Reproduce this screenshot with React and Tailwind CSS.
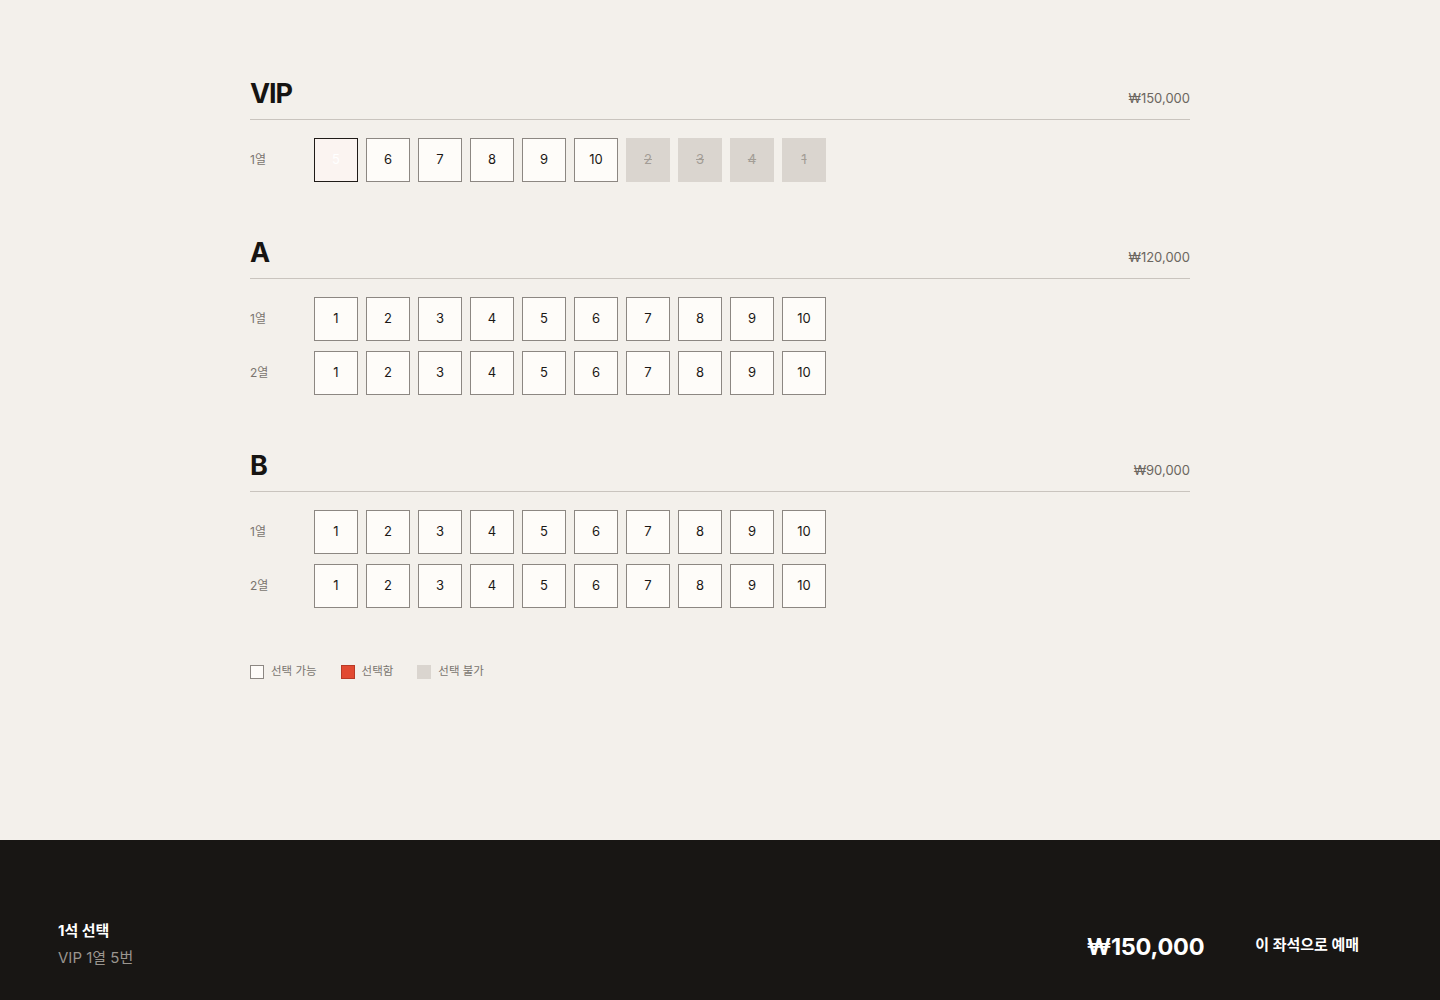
import React from "react";

const FONT = { fontFamily: 'Inter, "Noto Sans CJK KR", sans-serif' };

const sections = [
  {
    name: "VIP",
    price: "₩150,000",
    rows: [
      {
        label: "1열",
        seats: [
          { n: 5, state: "selected" },
          { n: 6 },
          { n: 7 },
          { n: 8 },
          { n: 9 },
          { n: 10 },
          { n: 2, state: "taken" },
          { n: 3, state: "taken" },
          { n: 4, state: "taken" },
          { n: 1, state: "taken" },
        ],
      },
    ],
  },
  {
    name: "A",
    price: "₩120,000",
    rows: [
      { label: "1열", seats: Array.from({ length: 10 }, (_, i) => ({ n: i + 1 })) },
      { label: "2열", seats: Array.from({ length: 10 }, (_, i) => ({ n: i + 1 })) },
    ],
  },
  {
    name: "B",
    price: "₩90,000",
    rows: [
      { label: "1열", seats: Array.from({ length: 10 }, (_, i) => ({ n: i + 1 })) },
      { label: "2열", seats: Array.from({ length: 10 }, (_, i) => ({ n: i + 1 })) },
    ],
  },
];

function Seat({ n, state }) {
  if (state === "taken") {
    return (
      <div className="w-[44px] h-[44px] flex items-center justify-center bg-[#dad5cf] text-[13px] text-[#a39d96] line-through">
        {n}
      </div>
    );
  }
  if (state === "selected") {
    return (
      <div className="w-[44px] h-[44px] flex items-center justify-center bg-[#fbf4f1] border border-[#1f1b18] text-[13px] text-white">
        {n}
      </div>
    );
  }
  return (
    <div className="w-[44px] h-[44px] flex items-center justify-center bg-[#fefcf9] border border-[#8c8782] text-[13px] text-[#1a1816]">
      {n}
    </div>
  );
}

function Section({ name, price, rows }) {
  return (
    <section>
      <div className="flex items-baseline justify-between border-b border-[#c9c4be] pb-[12px]">
        <h2 className="text-[27px] leading-none font-bold text-[#161412] tracking-[-0.04em]">{name}</h2>
        <span className="text-[13px] leading-none text-[#6b6660]">{price}</span>
      </div>
      <div className="mt-[18px] flex flex-col gap-[10px]">
        {rows.map((row) => (
          <div key={row.label} className="flex items-center">
            <div className="w-[64px] text-[12px] text-[#7a756f]">{row.label}</div>
            <div className="flex gap-[8px]">
              {row.seats.map((s, i) => (
                <Seat key={i} {...s} />
              ))}
            </div>
          </div>
        ))}
      </div>
    </section>
  );
}

export default function App() {
  return (
    <div className="h-screen flex flex-col bg-[#f3f0eb]" style={FONT}>
      <main className="flex-1">
        <div className="w-[940px] mx-auto pt-[80px] flex flex-col gap-[57px]">
          {sections.map((s) => (
            <Section key={s.name} {...s} />
          ))}
        </div>
        <div className="w-[940px] mx-auto mt-[55px] flex items-center gap-[24px] text-[11.5px] text-[#7a756f]">
          <div className="flex items-center gap-[7px]">
            <span className="w-[14px] h-[14px] bg-[#fefcf9] border border-[#8c8782]" />
            <span>선택 가능</span>
          </div>
          <div className="flex items-center gap-[7px]">
            <span className="w-[14px] h-[14px] bg-[#e24a32] border border-[#b83a26]" />
            <span>선택함</span>
          </div>
          <div className="flex items-center gap-[7px]">
            <span className="w-[14px] h-[14px] bg-[#dad5cf]" />
            <span>선택 불가</span>
          </div>
        </div>
      </main>
      <footer className="h-[160px] bg-[#181614] flex items-end justify-between px-[58px] pb-[31px]">
        <div className="flex flex-col">
          <div className="text-[15px] leading-[20px] font-bold text-white">1석 선택</div>
          <div className="mt-[6px] text-[15px] leading-[22px] text-[#9a958f]">VIP 1열 5번</div>
        </div>
        <div className="flex items-center gap-[28px]">
          <div className="pt-[4px] text-[23.5px] font-bold text-white tracking-[-0.01em]">₩150,000</div>
          <button className="h-[48px] px-[23px] text-[15px] font-bold text-white">이 좌석으로 예매</button>
        </div>
      </footer>
    </div>
  );
}
